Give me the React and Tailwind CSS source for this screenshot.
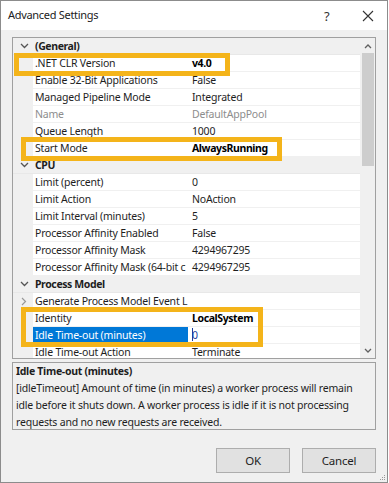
import React from "react";

const rows = [
  { type: "cat", label: "(General)" },
  { name: ".NET CLR Version", value: "v4.0", bold: true },
  { name: "Enable 32-Bit Applications", value: "False" },
  { name: "Managed Pipeline Mode", value: "Integrated" },
  { name: "Name", value: "DefaultAppPool", gray: true },
  { name: "Queue Length", value: "1000" },
  { name: "Start Mode", value: "AlwaysRunning", bold: true },
  { type: "cat", label: "CPU" },
  { name: "Limit (percent)", value: "0" },
  { name: "Limit Action", value: "NoAction" },
  { name: "Limit Interval (minutes)", value: "5" },
  { name: "Processor Affinity Enabled", value: "False" },
  { name: "Processor Affinity Mask", value: "4294967295" },
  { name: "Processor Affinity Mask (64-bit c", value: "4294967295" },
  { type: "cat", label: "Process Model" },
  { name: "Generate Process Model Event L", value: "", expand: true },
  { name: "Identity", value: "LocalSystem", bold: true },
  { name: "Idle Time-out (minutes)", value: "0", selected: true },
  { name: "Idle Time-out Action", value: "Terminate" },
];

function ChevronDown() {
  return (
    <svg width="9" height="6" viewBox="0 0 9 6" className="block">
      <path d="M1 1 L4.5 4.5 L8 1" fill="none" stroke="#555" strokeWidth="1.3" />
    </svg>
  );
}
function ChevronRight() {
  return (
    <svg width="6" height="9" viewBox="0 0 6 9" className="block">
      <path d="M1 1 L4.5 4.5 L1 8" fill="none" stroke="#999" strokeWidth="1.2" />
    </svg>
  );
}

function Row({ r }) {
  if (r.type === "cat") {
    return (
      <div className="h-[17px] flex items-center bg-[#f0f0f0] border-b border-[#e8e8e8]">
        <div className="w-[20px] flex justify-center pl-[2px]">
          <ChevronDown />
        </div>
        <div className="pl-[2px] font-bold tracking-[-0.4px] text-[#1e1e1e]">{r.label}</div>
      </div>
    );
  }
  return (
    <div className="h-[17px] flex items-stretch">
      <div className="w-[20px] bg-[#f0f0f0] flex items-center justify-center pl-[2px]">
        {r.expand ? <ChevronRight /> : null}
      </div>
      <div
        className={
          "w-[155px] flex items-center pl-[2px] whitespace-nowrap overflow-hidden border-b " +
          (r.selected
            ? "bg-[#0078d7] text-white border-[#0078d7]"
            : r.gray
            ? "text-[#8d8d8d] border-[#f0f0f0]"
            : "text-[#1e1e1e] border-[#f0f0f0]")
        }
      >
        {r.name}
      </div>
      <div className="w-[3px] border-b border-[#f0f0f0]" />
      <div
        className={
          "flex-1 flex items-center pl-[1px] whitespace-nowrap overflow-hidden border-b border-[#f0f0f0] " +
          (r.bold
            ? "font-bold tracking-[-0.4px] text-black"
            : r.gray
            ? "text-[#8d8d8d]"
            : "text-[#1e1e1e]")
        }
      >
        {r.selected ? (
          <span className="relative">
            <span className="absolute left-0 top-[1px] h-[13px] w-[1px] bg-[#1a3fa0]" />
            <span className="text-[#1a3fa0]">{r.value}</span>
          </span>
        ) : (
          r.value
        )}
      </div>
    </div>
  );
}

export default function App() {
  return (
    <div
      className="w-[388px] h-[483px] bg-[#f0f0f0] border border-[#8c8c8c] relative flex flex-col text-[10.5px] tracking-[-0.2px] text-[#1e1e1e]"
      style={{ fontFamily: "'Noto Sans', 'Open Sans', sans-serif" }}
    >
      {/* Title bar */}
      <div className="h-[29px] bg-white flex items-center pl-[7px] shrink-0 relative">
        <span className="text-[11px] tracking-[-0.3px] text-[#222]">Advanced Settings</span>
        <span className="absolute left-[323px] top-[6px] text-[13px] text-[#333]">?</span>
        <svg className="absolute left-[361px] top-[9px]" width="12" height="12" viewBox="0 0 12 12">
          <path d="M1 1 L11 11 M11 1 L1 11" stroke="#333" strokeWidth="1.1" />
        </svg>
      </div>

      <div className="flex-1 flex flex-col pl-[11px] pr-[11px] pt-[7px]">
        {/* Property grid */}
        <div className="h-[322px] border border-[#a0a0a0] bg-white flex overflow-hidden">
          <div className="flex-1 overflow-hidden leading-[17px]">
            {rows.map((r, i) => (
              <Row key={i} r={r} />
            ))}
          </div>
          <div className="w-[15px] bg-[#f0f0f0] flex flex-col items-center">
            <div className="h-[14px] flex items-center justify-center pt-[3px]">
              <svg width="8" height="5" viewBox="0 0 8 5">
                <path d="M1 4 L4 1 L7 4" fill="none" stroke="#606060" strokeWidth="1.3" />
              </svg>
            </div>
            <div className="w-[12px] h-[113px] bg-[#cdcdcd] mt-[1px]" />
            <div className="flex-1" />
            <div className="h-[14px] flex items-center justify-center pb-[2px]">
              <svg width="8" height="5" viewBox="0 0 8 5">
                <path d="M1 1 L4 4 L7 1" fill="none" stroke="#606060" strokeWidth="1.3" />
              </svg>
            </div>
          </div>
        </div>

        {/* Description panel */}
        <div className="mt-[3px] h-[68px] border border-[#a0a0a0] bg-[#f0f0f0] px-[3px] leading-[17px] overflow-hidden whitespace-nowrap">
          <div className="font-bold tracking-[-0.3px] text-[#1e1e1e]">Idle Time-out (minutes)</div>
          <div className="text-[#1e1e1e]">
            [idleTimeout] Amount of time (in minutes) a worker process will remain
          </div>
          <div className="text-[#1e1e1e]">
            idle before it shuts down. A worker process is idle if it is not processing
          </div>
          <div className="text-[#1e1e1e]">requests and no new requests are received.</div>
        </div>

        {/* Buttons */}
        <div className="flex justify-end gap-[12px] mt-[18px]">
          <button className="w-[74px] h-[25px] bg-[#e1e1e1] border border-[#adadad] text-[11.5px] text-[#1e1e1e]">
            OK
          </button>
          <button className="w-[74px] h-[25px] bg-[#e1e1e1] border border-[#adadad] text-[11.5px] text-[#1e1e1e]">
            Cancel
          </button>
        </div>
      </div>

      {/* Resize grip */}
      <svg className="absolute right-[1px] bottom-[1px]" width="8" height="8" viewBox="0 0 8 8">
        <rect x="6" y="2" width="1" height="1" fill="#999" />
        <rect x="4" y="4" width="1" height="1" fill="#999" />
        <rect x="6" y="4" width="1" height="1" fill="#999" />
        <rect x="2" y="6" width="1" height="1" fill="#999" />
        <rect x="4" y="6" width="1" height="1" fill="#999" />
        <rect x="6" y="6" width="1" height="1" fill="#999" />
      </svg>

      {/* Highlight boxes (annotations over content) */}
      <div className="absolute left-[13px] top-[52px] w-[216px] h-[23px] border-[5px] border-[#f4b41a]" />
      <div className="absolute left-[20px] top-[136px] w-[261px] h-[24px] border-[5px] border-[#f4b41a]" />
      <div className="absolute left-[20px] top-[306px] w-[242px] h-[40px] border-[5px] border-[#f4b41a]" />
    </div>
  );
}
